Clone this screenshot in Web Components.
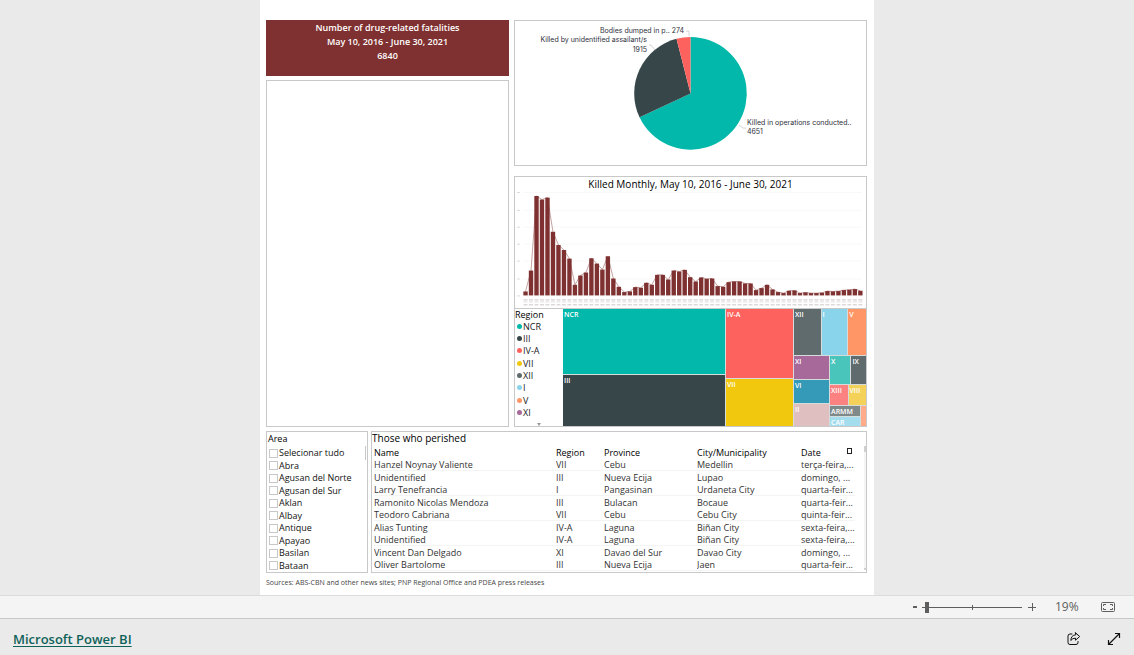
<!DOCTYPE html>
<html lang="pt">
<head>
<meta charset="utf-8">
<meta name="viewport" content="width=device-width, initial-scale=1">
<title>Microsoft Power BI</title>
<style>
  html, body { height: 100%; }
  body { margin: 0; font-family: "Open Sans", "Noto Sans", sans-serif; background: #eaeaea; }
</style>
</head>
<body>
<report-app></report-app>

<script>
const define = (name, markup, setup) => {
  const template = document.createElement('template');
  template.innerHTML = markup;
  customElements.define(name, class extends HTMLElement {
    constructor() {
      super();
      this.attachShadow({ mode: 'open' }).append(template.content.cloneNode(true));
      if (setup) setup(this.shadowRoot, this);
    }
  });
};

/* Bordered tile around whatever is slotted in */
define('report-panel', `
<style>
  :host { display: flex; flex-direction: column; box-sizing: border-box; border: 1px solid #c8c8c8; background: #fff; min-width: 0; min-height: 0; overflow: hidden; }
</style>
<slot></slot>`);

define('fatality-card', `
<style>
  :host { display: block; box-sizing: border-box; height: 56px; padding-top: 1px; background: #7f3030; color: #fff; text-align: center; font-size: 9px; line-height: 14px; font-weight: 600; }
  p { margin: 0; }
</style>
<p>Number of drug-related fatalities</p>
<p>May 10, 2016 - June 30, 2021</p>
<p>6840</p>`);

define('pie-chart', `
<style>
  :host { display: block; flex: 1; min-height: 0; }
  svg { display: block; width: 100%; height: 100%; }
  text { font: 400 7px Inter, sans-serif; fill: #30303c; }
  polyline { fill: none; stroke: #d4d4d4; stroke-width: 1; }
</style>
<svg viewBox="0 0 351 144" role="img" aria-label="Fatalities by circumstance">
  <g id="slices"></g>
  <polyline points="171,10 174,10 174,15"/>
  <polyline points="134,24 136,24 140,29"/>
  <polyline points="224,104 228,107 231,107"/>
  <text x="169" y="12" text-anchor="end">Bodies dumped in p.. 274</text>
  <text x="132" y="21" text-anchor="end">Killed by unidentified assailant/s</text>
  <text x="132" y="31" text-anchor="end">1915</text>
  <text x="232" y="104">Killed in operations conducted..</text>
  <text x="232" y="113">4651</text>
</svg>`, root => {
  const data = [[4651, '#01b8aa'], [1915, '#374649'], [274, '#fd625e']];
  const total = data.reduce((sum, [n]) => sum + n, 0);
  const cx = 175.5, cy = 72.3, r = 56.3;
  const at = turn => [cx + r * Math.sin(turn * 2 * Math.PI), cy - r * Math.cos(turn * 2 * Math.PI)];
  let start = 0;
  root.getElementById('slices').innerHTML = data.map(([n, color]) => {
    const end = start + n / total;
    const [x1, y1] = at(start), [x2, y2] = at(end);
    const large = end - start > 0.5 ? 1 : 0;
    start = end;
    return `<path fill="${color}" d="M${cx},${cy}L${x1},${y1}A${r},${r} 0 ${large} 1 ${x2},${y2}Z"/>`;
  }).join('');
});

define('monthly-chart', `
<style>
  :host { display: flex; flex-direction: column; flex: 1; min-height: 0; }
  h2 { margin: 0; font-size: 10px; line-height: 14px; font-weight: 400; text-align: center; color: #000; }
  svg { display: block; flex: 1; width: 100%; min-height: 0; }
</style>
<h2>Killed Monthly, May 10, 2016 - June 30, 2021</h2>
<svg viewBox="0 0 351 117" role="img" aria-label="Killed per month">
  <g id="grid" stroke="#f8f8f8"></g>
  <polyline id="trend" fill="none" stroke="#7f3030" stroke-opacity=".45"/>
  <g id="bars" fill="#7f3030"></g>
  <g id="ticks" stroke="#cdc8c8"></g>
</svg>`, root => {
  /* Bar heights in thirds of a plot unit, May 2016 to June 2021 */
  const values = [12,75,300,289,295,192,152,137,111,32,60,69,112,96,78,118,51,26,10,12,25,23,38,32,62,62,48,75,72,77,55,42,54,50,51,28,26,40,42,42,36,36,16,22,32,18,10,7,14,15,7,9,7,7,8,13,12,13,16,17,19,14];
  const base = 105, pitch = 5.52, first = 9.6;
  const mid = i => first + i * pitch;
  const top = i => base - values[i] / 3;
  root.getElementById('bars').innerHTML = values.map((v, i) =>
    `<rect x="${mid(i) - 2.2}" y="${top(i)}" width="4.4" height="${v / 3}"/>`).join('');
  root.getElementById('trend').setAttribute('points', values.map((v, i) => `${mid(i)},${top(i)}`).join(' '));
  let grid = '', ticks = '';
  for (let i = 0; i < 7; i++) {
    const y = Math.round(base - i * 17.3) + .5;
    grid += `<path d="M7,${y}H348"/>`;
    ticks += `<path stroke="#dedada" d="M1,${y}H4"/>`;
  }
  root.getElementById('grid').innerHTML = grid;
  [109.5, 111.5, 114.5].forEach((y, row) => {
    ticks += `<path stroke-dasharray="4 1.52" stroke="${row === 1 ? '#e4dede' : '#cdc6c6'}" d="M${first - 2},${y}H${mid(61) + 2}"/>`;
  });
  root.getElementById('ticks').innerHTML = ticks;
});

define('region-legend', `
<style>
  :host { display: block; box-sizing: border-box; width: 48px; font-size: 9px; color: #222; }
  h3 { margin: 0; font-size: 9px; line-height: 12px; font-weight: 400; color: #000; }
  ul { list-style: none; margin: 0; padding: 0 0 0 2px; }
  li { display: flex; align-items: center; gap: 1px; height: 12px; line-height: 12px; }
  li:nth-child(3n) { padding-bottom: 1px; }
  i { width: 5px; height: 5px; border-radius: 50%; }
  svg { display: block; margin: 4px 0 0 22px; }
</style>
<h3>Region</h3>
<ul></ul>
<svg width="4" height="3" viewBox="0 0 4 3"><path d="M0 0H4L2 3Z" fill="#999"/></svg>`, root => {
  root.querySelector('ul').innerHTML = [['NCR','#01b8aa'],['III','#374649'],['IV-A','#fd625e'],['VII','#f2c80f'],['XII','#5f6b6d'],['I','#8ad4eb'],['V','#fe9666'],['XI','#a66999']]
    .map(([name, color]) => `<li><i style="background:${color}"></i>${name}</li>`).join('');
});

define('map-cell', `
<style>
  :host { display: block; box-sizing: border-box; min-width: 0; min-height: 0; overflow: hidden; padding-left: 1px; color: #fff; font-size: 7px; line-height: 11px; font-weight: 600; white-space: nowrap; background: var(--fill); }
</style>
<slot></slot>`);

define('region-treemap', `
<style>
  :host { display: grid; flex: 1; min-width: 0; grid-template-columns: 162fr 67fr 72fr; gap: 1px; background: #d6dcdc; }
  div { display: grid; gap: 1px; min-width: 0; min-height: 0; }
  .first { grid-template-rows: 65fr 51fr; }
  .second { grid-template-rows: 69fr 47fr; }
  .third { grid-template-rows: 46fr 70fr; }
  .top { grid-template-columns: 27fr 26fr 18fr; }
  .low { grid-template-columns: 36fr 37fr; }
  .left { grid-template-rows: 23fr 23fr 22fr; }
  .right { grid-template-rows: 28fr 20fr 20fr; }
  .a { grid-template-columns: 21fr 15fr; }
  .b { grid-template-columns: 18fr 18fr; }
  .c { grid-template-columns: 31fr 5fr; }
  .d { grid-template-rows: 10fr 9fr; }
</style>
<div class="first"><map-cell style="--fill:#01b8aa">NCR</map-cell><map-cell style="--fill:#374649">III</map-cell></div>
<div class="second"><map-cell style="--fill:#fd625e">IV-A</map-cell><map-cell style="--fill:#f2c80f">VII</map-cell></div>
<div class="third">
  <div class="top"><map-cell style="--fill:#5f6b6d">XII</map-cell><map-cell style="--fill:#8ad4eb">I</map-cell><map-cell style="--fill:#fe9666">V</map-cell></div>
  <div class="low">
    <div class="left"><map-cell style="--fill:#a66999">XI</map-cell><map-cell style="--fill:#3599b8">VI</map-cell><map-cell style="--fill:#dfbfbf">II</map-cell></div>
    <div class="right">
      <div class="a"><map-cell style="--fill:#4ac5bb">X</map-cell><map-cell style="--fill:#5f6b6d">IX</map-cell></div>
      <div class="b"><map-cell style="--fill:#fb8281">XIII</map-cell><map-cell style="--fill:#f4d25a">VIII</map-cell></div>
      <div class="c"><div class="d"><map-cell style="--fill:#7f898a">ARMM</map-cell><map-cell style="--fill:#a4ddee">CAR</map-cell></div><map-cell style="--fill:#fdab89"></map-cell></div>
    </div>
  </div>
</div>`);

define('area-slicer', `
<style>
  :host { display: flex; flex-direction: column; flex: 1; min-height: 0; color: #111; font-size: 9px; position: relative; }
  h2 { margin: 0; padding-left: 1px; font-size: 9px; line-height: 14px; font-weight: 400; color: #000; }
  ul { flex: 1; display: flex; flex-direction: column; justify-content: space-between; list-style: none; margin: 0; padding: 1px 2px 0; }
  label { display: flex; align-items: center; gap: 1px; height: 12px; line-height: 12px; white-space: nowrap; }
  input { appearance: none; box-sizing: border-box; flex: none; width: 9px; height: 9px; margin: 0; border: 1px solid #c8c8c8; background: #fff; }
  .thumb { position: absolute; right: 1px; top: 14px; width: 1px; height: 14px; background: #c8c8c8; }
</style>
<h2>Area</h2>
<ul></ul>
<span class="thumb"></span>`, root => {
  root.querySelector('ul').innerHTML = ['Selecionar tudo','Abra','Agusan del Norte','Agusan del Sur','Aklan','Albay','Antique','Apayao','Basilan','Bataan']
    .map(name => `<li><label><input type="checkbox">${name}</label></li>`).join('');
});

define('victims-table', `
<style>
  :host { display: block; flex: 1; color: #333; position: relative; }
  h2 { margin: 0; font-size: 10px; line-height: 13px; font-weight: 400; color: #000; }
  .scroll { padding: 1px 11px 0 2px; }
  table { width: 100%; table-layout: fixed; border-collapse: separate; border-spacing: 0; font-size: 9px; }
  .region { width: 48px; } .province { width: 93px; } .city { width: 104px; } .date { width: 54px; }
  th, td { padding: 0; height: 12px; line-height: 12px; text-align: left; font-weight: 400; white-space: nowrap; overflow: hidden; box-sizing: border-box; }
  th { color: #000; height: 13px; line-height: 13px; }
  tbody tr:nth-child(odd) td { line-height: 11px; border-bottom: 1px solid #f4f4f4; }
  tbody tr:nth-child(even) td { height: 13px; line-height: 13px; }
  .sort { position: absolute; right: 14px; top: 16px; box-sizing: border-box; width: 5px; height: 6px; border: 1px solid #222; }
  .track { position: absolute; right: 0; top: 14px; bottom: 2px; width: 2px; box-sizing: border-box; border: solid #d0d0d0; border-width: 6px 0 2px; background: #f4f4f4; }
</style>
<h2>Those who perished</h2>
<div class="scroll">
<table>
  <colgroup><col><col class="region"><col class="province"><col class="city"><col class="date"></colgroup>
  <thead><tr><th>Name</th><th>Region</th><th>Province</th><th>City/Municipality</th><th>Date</th></tr></thead>
  <tbody></tbody>
</table>
</div>
<span class="sort"></span><span class="track"></span>`, root => {
  root.querySelector('tbody').innerHTML = [
    ['Hanzel Noynay Valiente','VII','Cebu','Medellin','terça-feira,...'],
    ['Unidentified','III','Nueva Ecija','Lupao','domingo, ...'],
    ['Larry Tenefrancia','I','Pangasinan','Urdaneta City','quarta-feir...'],
    ['Ramonito Nicolas Mendoza','III','Bulacan','Bocaue','quarta-feir...'],
    ['Teodoro Cabriana','VII','Cebu','Cebu City','quinta-feir...'],
    ['Alias Tunting','IV-A','Laguna','Biñan City','sexta-feira,...'],
    ['Unidentified','IV-A','Laguna','Biñan City','sexta-feira,...'],
    ['Vincent Dan Delgado','XI','Davao del Sur','Davao City','domingo, ...'],
    ['Oliver Bartolome','III','Nueva Ecija','Jaen','quarta-feir...']
  ].map(row => `<tr>${row.map(cell => `<td>${cell}</td>`).join('')}</tr>`).join('');
});

define('report-canvas', `
<style>
  :host { display: flex; flex-direction: column; box-sizing: border-box; min-width: 0; padding: 20px 7px 0 6px; background: #fff; }
  .upper { flex: 1; display: grid; grid-template-columns: 243fr 353fr; gap: 5px; min-height: 0; }
  .column { display: flex; flex-direction: column; min-width: 0; min-height: 0; }
  .left { gap: 4px; }
  .map-area { flex: 1; }
  .pie { flex: 146 1 0; margin-bottom: 10px; }
  .monthly { flex: 132 1 0; border-bottom: 0; }
  .tree { flex: 119 1 0; flex-direction: row; }
  .lower { display: grid; grid-template-columns: 102fr 496fr; gap: 3px; height: 142px; margin-top: 4px; }
  footer { height: 22px; line-height: 19px; font-size: 7px; color: #444; white-space: nowrap; }
</style>
<div class="upper">
  <div class="column left">
    <fatality-card></fatality-card>
    <report-panel class="map-area"></report-panel>
  </div>
  <div class="column">
    <report-panel class="pie"><pie-chart></pie-chart></report-panel>
    <report-panel class="monthly"><monthly-chart></monthly-chart></report-panel>
    <report-panel class="tree"><region-legend></region-legend><region-treemap></region-treemap></report-panel>
  </div>
</div>
<div class="lower">
  <report-panel><area-slicer></area-slicer></report-panel>
  <report-panel><victims-table></victims-table></report-panel>
</div>
<footer>Sources: ABS-CBN and other news sites; PNP Regional Office and PDEA press releases</footer>`);

define('zoom-bar', `
<style>
  :host { display: flex; align-items: center; justify-content: flex-end; box-sizing: border-box; height: 23px; padding-right: 18px; border-top: 1px solid #dcdcdc; background: #f4f4f4; color: #605e5c; }
  button { border: 0; padding: 0; background: none; color: inherit; width: 10px; height: 20px; }
  .slider { position: relative; display: flex; width: 100px; height: 12px; margin: 0 5px 0 2px; }
  .slider::before { content: ""; position: absolute; left: 50%; top: 4px; width: 1px; height: 5px; background: #605e5c; }
  input { appearance: none; width: 100%; height: 12px; margin: 0; background: linear-gradient(#605e5c, #605e5c) center / 100% 1px no-repeat; }
  input::-webkit-slider-thumb { appearance: none; width: 4px; height: 11px; background: #605e5c; }
  output { width: 24px; margin: 0 22px 0 18px; font-size: 12px; line-height: 20px; }
  .fit { width: 15px; }
  svg { display: block; margin: auto; }
</style>
<button aria-label="Zoom out"><svg width="8" height="8" viewBox="0 0 8 8" stroke="#605e5c" stroke-width="2"><path d="M2 4H6"/></svg></button>
<span class="slider"><input type="range" min="5" max="400" value="19" aria-label="Zoom"></span>
<button aria-label="Zoom in"><svg width="8" height="8" viewBox="0 0 8 8" stroke="#605e5c"><path d="M0 4.500H8M4.500 0V8"/></svg></button>
<output>19%</output>
<button class="fit" aria-label="Fit to page"><svg width="15" height="11" viewBox="0 0 15 11" fill="none" stroke="#605e5c"><rect x=".5" y=".5" width="13" height="9" rx="1"/><path d="M5 2.500H2.500V4M9 2.500H11.500V4M5 7.500H2.500V6M9 7.500H11.500V6"/></svg></button>`);

define('brand-bar', `
<style>
  :host { display: flex; align-items: center; box-sizing: border-box; height: 37px; padding: 4px 13px 0; border-top: 1px solid #c8c8c8; background: #eaeaea; }
  a { margin-right: auto; color: #0f6259; font-size: 13px; line-height: 20px; font-weight: 600; text-decoration: underline; text-underline-offset: 2px; }
  button { border: 0; padding: 0; background: none; height: 14px; width: 14px; }
  .share { margin-right: 26px; }
  svg { display: block; }
</style>
<a href="#">Microsoft Power BI</a>
<button class="share" aria-label="Share"><svg width="14" height="14" viewBox="0 0 14 14" fill="none" stroke="#111" stroke-linejoin="round" stroke-linecap="round"><path d="M5 2H3Q1 2 1 4V10.500Q1 12.500 3 12.500H9Q11 12.500 11 10.500V9.500"/><path d="M8.500 .8L12.700 4.500L8.500 8.200V6.200Q5.500 6 3.800 8.500Q4 3.200 8.500 2.800Z"/></svg></button>
<button aria-label="Full screen"><svg width="14" height="14" viewBox="0 0 14 14" fill="none" stroke="#111" stroke-width="1.200"><path d="M1.500 12.500L12.500 1.500M8 1.500H12.500V6M1.500 8V12.500H6"/></svg></button>`);

define('report-app', `
<style>
  :host { display: flex; flex-direction: column; min-height: 100vh; }
  main { flex: 1; display: grid; grid-template-columns: 260fr 614fr 260fr; min-height: 0; }
  report-canvas { grid-column: 2; }
</style>
<main><report-canvas></report-canvas></main>
<zoom-bar></zoom-bar>
<brand-bar></brand-bar>`);
</script>
</body>
</html>
